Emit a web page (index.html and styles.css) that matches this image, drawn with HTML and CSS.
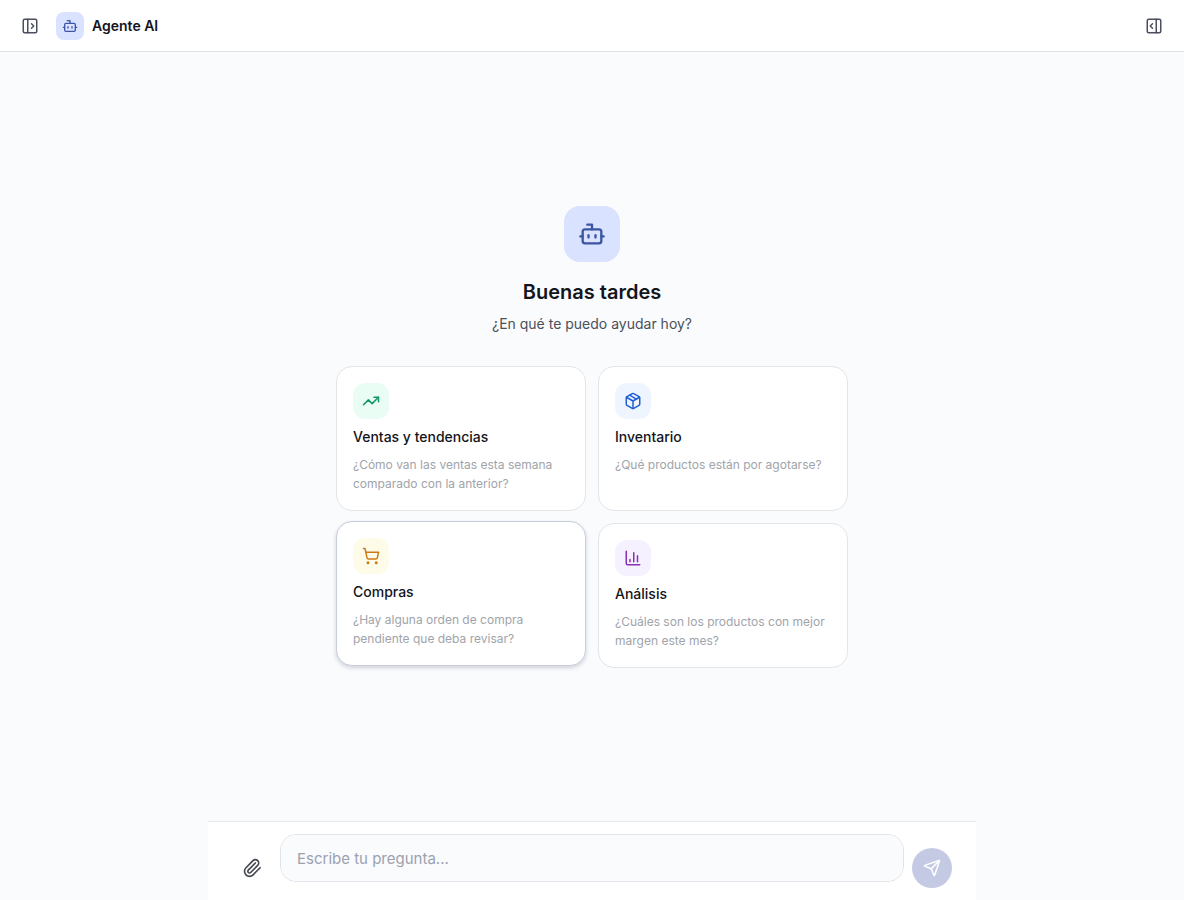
FILE: index.html
```html
<!DOCTYPE html>
<html lang="es">
<head>
<meta charset="utf-8">
<meta name="viewport" content="width=device-width, initial-scale=1">
<title>Agente AI</title>
<link rel="stylesheet" href="styles.css">
</head>
<body>
<div class="app">
  <header class="header">
    <button class="icon-button" type="button" aria-label="Abrir panel izquierdo">
      <svg class="icon" viewBox="0 0 24 24"><rect x="3" y="3" width="18" height="18" rx="2"/><path d="M9 3v18M14 9l3 3-3 3"/></svg>
    </button>
    <div class="brand">
      <span class="brand-badge">
        <svg class="icon icon-small" viewBox="0 0 24 24"><path d="M12 8V4H8"/><rect x="4" y="8" width="16" height="12" rx="2"/><path d="M2 14h2M20 14h2M15 13v2M9 13v2"/></svg>
      </span>
      <h1 class="brand-name">Agente AI</h1>
    </div>
    <button class="icon-button" type="button" aria-label="Abrir panel derecho">
      <svg class="icon" viewBox="0 0 24 24"><rect x="3" y="3" width="18" height="18" rx="2"/><path d="M15 3v18M10 15l-3-3 3-3"/></svg>
    </button>
  </header>

  <main class="welcome">
    <span class="hero-badge">
      <svg class="icon icon-large" viewBox="0 0 24 24"><path d="M12 8V4H8"/><rect x="4" y="8" width="16" height="12" rx="2"/><path d="M2 14h2M20 14h2M15 13v2M9 13v2"/></svg>
    </span>
    <h2 class="greeting">Buenas tardes</h2>
    <p class="subtitle">¿En qué te puedo ayudar hoy?</p>
    <div class="cards">
      <button class="card" type="button">
        <span class="card-icon green"><svg class="icon" viewBox="0 0 24 24"><path d="m22 7-8.5 8.5-5-5L2 17"/><path d="M16 7h6v6"/></svg></span>
        <span class="card-title">Ventas y tendencias</span>
        <span class="card-text">¿Cómo van las ventas esta semana comparado con la anterior?</span>
      </button>
      <button class="card" type="button">
        <span class="card-icon blue"><svg class="icon" viewBox="0 0 24 24"><path d="m7.500 4.270 9 5.150"/><path d="M21 8a2 2 0 0 0-1-1.730l-7-4a2 2 0 0 0-2 0l-7 4A2 2 0 0 0 3 8v8a2 2 0 0 0 1 1.730l7 4a2 2 0 0 0 2 0l7-4A2 2 0 0 0 21 16Z"/><path d="m3.300 7 8.700 5 8.700-5M12 22V12"/></svg></span>
        <span class="card-title">Inventario</span>
        <span class="card-text">¿Qué productos están por agotarse?</span>
      </button>
      <button class="card card-active" type="button">
        <span class="card-icon amber"><svg class="icon" viewBox="0 0 24 24"><circle cx="8" cy="21" r="1"/><circle cx="19" cy="21" r="1"/><path d="M2.050 2.050h2l2.660 12.420a2 2 0 0 0 2 1.580h9.780a2 2 0 0 0 1.950-1.570l1.650-7.430H5.120"/></svg></span>
        <span class="card-title">Compras</span>
        <span class="card-text">¿Hay alguna orden de compra pendiente que deba revisar?</span>
      </button>
      <button class="card" type="button">
        <span class="card-icon purple"><svg class="icon" viewBox="0 0 24 24"><path d="M3 3v16a2 2 0 0 0 2 2h16M18 17V9M13 17V5M8 17v-3"/></svg></span>
        <span class="card-title">Análisis</span>
        <span class="card-text">¿Cuáles son los productos con mejor margen este mes?</span>
      </button>
    </div>
  </main>

  <form class="composer">
    <button class="attach" type="button" aria-label="Adjuntar archivo">
      <svg class="icon icon-medium" viewBox="0 0 24 24"><path d="m16 6-8.414 8.586a2 2 0 0 0 2.829 2.829l8.414-8.586a4 4 0 1 0-5.657-5.657l-8.379 8.551a6 6 0 1 0 8.485 8.485l8.379-8.551"/></svg>
    </button>
    <div class="field">
      <textarea class="prompt" rows="1" aria-label="Escribe tu pregunta" placeholder="Escribe tu pregunta..."></textarea>
    </div>
    <button class="send" type="button" aria-label="Enviar">
      <svg class="icon" viewBox="0 0 24 24"><path d="M14.536 21.686a.5.5 0 0 0 .937-.024l6.5-19a.496.496 0 0 0-.635-.635l-19 6.5a.5.5 0 0 0-.024.937l7.930 3.180a2 2 0 0 1 1.112 1.110z"/><path d="m21.854 2.147-10.940 10.939"/></svg>
    </button>
  </form>
</div>
</body>
</html>
```

FILE: styles.css
```css
* {
  box-sizing: border-box;
}

body {
  margin: 0;
  background: #f9fbfd;
  color: #13141c;
  font-family: Inter, "Liberation Sans", sans-serif;
  font-size: 14px;
  line-height: 20px;
}

h1, h2, p {
  margin: 0;
}

button, textarea {
  font: inherit;
}

button {
  padding: 0;
  border: 0;
  background: none;
  color: inherit;
  cursor: pointer;
}

.app {
  display: flex;
  flex-direction: column;
  min-height: 100vh;
}

.icon {
  display: block;
  width: 18px;
  height: 18px;
  fill: none;
  stroke: currentColor;
  stroke-width: 2;
  stroke-linecap: round;
  stroke-linejoin: round;
}

.icon-small {
  width: 16px;
  height: 16px;
}

.icon-medium {
  width: 20px;
  height: 20px;
}

.icon-large {
  width: 28px;
  height: 28px;
}

.header {
  display: flex;
  align-items: center;
  gap: 8px;
  min-height: 52px;
  padding: 0 12px;
  border-bottom: 1px solid #dfe2e6;
  background: #fff;
}

.icon-button {
  display: grid;
  place-items: center;
  width: 36px;
  height: 36px;
  color: #4b4e5c;
}

.brand {
  display: flex;
  flex: 1;
  align-items: center;
  gap: 8px;
}

.brand-badge,
.hero-badge,
.card-icon {
  display: grid;
  place-items: center;
}

.brand-badge {
  width: 28px;
  height: 28px;
  border-radius: 8px;
  background: #d9e2ff;
  color: #4055a5;
}

.brand-name {
  font-size: 14px;
  font-weight: 600;
}

.welcome {
  display: flex;
  flex: 1;
  flex-direction: column;
  align-items: center;
  justify-content: center;
  padding: 24px;
}

.hero-badge {
  width: 56px;
  height: 56px;
  margin-bottom: 16px;
  border-radius: 16px;
  background: #d9e2ff;
  color: #3b55a3;
}

.greeting {
  margin-bottom: 8px;
  font-size: 20px;
  font-weight: 600;
  line-height: 28px;
}

.subtitle {
  margin-bottom: 32px;
  color: #4b4f58;
}

.cards {
  display: grid;
  grid-template-columns: repeat(2, 1fr);
  gap: 12px;
  width: 100%;
  max-width: 512px;
}

.card {
  display: flex;
  flex-direction: column;
  align-items: flex-start;
  gap: 8px;
  padding: 16px 16px 17px;
  border: 1px solid #e3e5e9;
  border-radius: 16px;
  background: #fff;
  text-align: left;
}

.card-active {
  border-color: #c9cedc;
  box-shadow: 0 2px 4px rgb(20 30 50 / 18%);
  transform: translateY(-2px);
}

.card-icon {
  width: 36px;
  height: 36px;
  border-radius: 12px;
}

.green {
  background: #e9fdf4;
  color: #15966a;
}

.blue {
  background: #eff5ff;
  color: #2060d4;
}

.amber {
  background: #fffbe9;
  color: #cd7a16;
}

.purple {
  background: #f6f1ff;
  color: #8a2fb8;
}

.card-title {
  font-weight: 500;
}

.card-text {
  color: #a0a4aa;
  font-size: 12px;
  line-height: 19px;
}

.composer {
  display: flex;
  align-items: flex-end;
  gap: 8px;
  width: 100%;
  max-width: 768px;
  margin: 0 auto;
  padding: 12px 24px;
  border-top: 1px solid #e8eaed;
  background: #fff;
}

.attach,
.send {
  display: grid;
  flex: none;
  place-items: center;
  width: 40px;
  height: 40px;
}

.attach {
  color: #44474f;
}

.send {
  border-radius: 50%;
  background: #c5cae4;
  color: #fff;
}

.field {
  flex: 1;
  padding-bottom: 6px;
}

.prompt {
  display: block;
  width: 100%;
  height: 48px;
  padding: 12px 16px;
  border: 1px solid #e0e4e8;
  border-radius: 16px;
  background: #f9fbfd;
  color: inherit;
  font-size: 15px;
  line-height: 24px;
  resize: none;
}

.prompt::placeholder {
  color: #9ca1b0;
}
```
